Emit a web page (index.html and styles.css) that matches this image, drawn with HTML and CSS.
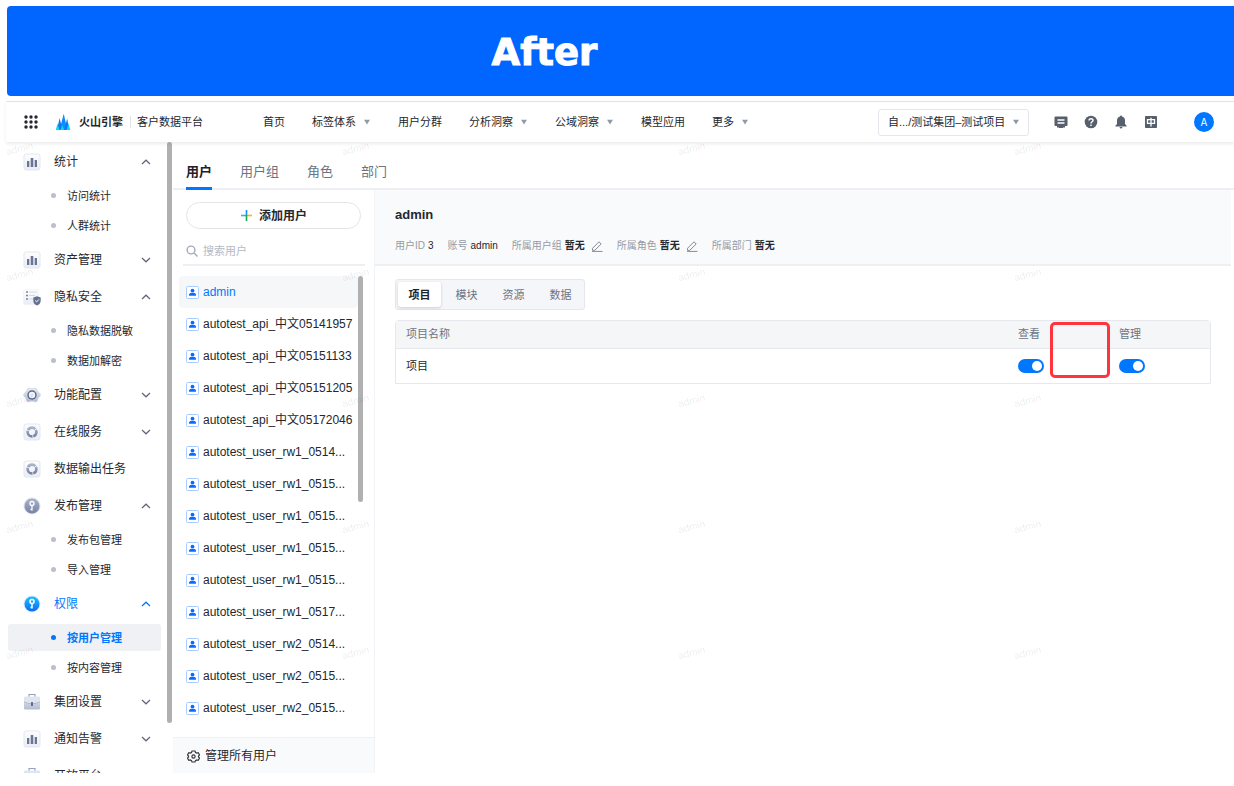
FILE: index.html
```html
<!DOCTYPE html>
<html lang="zh-CN">
<head>
<meta charset="utf-8">
<meta name="viewport" content="width=device-width, initial-scale=1">
<title>客户数据平台</title>
<link rel="stylesheet" href="styles.css">
</head>
<body>
<svg class="defs" aria-hidden="true">
  <defs>
    <linearGradient id="tile" x1="0" y1="0" x2="0" y2="1"><stop offset="0" stop-color="#fdfdfe"/><stop offset="1" stop-color="#e9edf5"/></linearGradient>
    <linearGradient id="slate" x1="0" y1="0" x2="0" y2="1"><stop offset="0" stop-color="#a9b3ca"/><stop offset="1" stop-color="#7783a5"/></linearGradient>
    <linearGradient id="pale" x1="0" y1="0" x2="0" y2="1"><stop offset="0" stop-color="#e6eaf2"/><stop offset="1" stop-color="#b3bdd2"/></linearGradient>
    <linearGradient id="sky" x1="0" y1="0" x2="0" y2="1"><stop offset="0" stop-color="#1cc0ff"/><stop offset="1" stop-color="#0a6cf0"/></linearGradient>
  </defs>
  <symbol id="i-chart" viewBox="0 0 18 18"><rect x="1" y="1" width="16" height="16" rx="2" fill="url(#tile)" stroke="#e3e7f0"/><path d="M4 8h2.300v6H4zM7.700 5h2.600v9H7.700zM11.700 7H14v7h-2.300z" fill="#6b7593"/></symbol>
  <symbol id="i-shield" viewBox="0 0 18 18"><rect x=".5" y="1.500" width="15" height="15" rx="1" fill="url(#tile)" stroke="#edf0f6" stroke-width=".6"/><path d="M3 4h2M3 7.500h2M3 11h2" stroke="#7a85a3" stroke-width="1.500"/><path d="M6 4h8M6 7.500h6M6 11h4" stroke="#d3d8e4"/><path d="M14 8.200l3.700 1.300v3.200c0 2.300-1.500 3.800-3.700 4.800-2.200-1-3.700-2.500-3.700-4.800V9.500z" fill="#66718f"/><path d="M12.200 12.500l1.400 1.400 2.400-2.500" fill="none" stroke="#fff"/></symbol>
  <symbol id="i-config" viewBox="0 0 18 18"><path d="M5 2.200c1-.6 2.200.4 4 .4s3-1 4-.4l1.500 2.500c.2 1 1.800 1.800 3 4-.2 2-2 2.800-2.500 3.800s0 2.200-1.500 3.200c-1.500.6-2.500-.5-4.500-.5s-3 1.100-4.500.5c-1.500-1-1-2.200-1.500-3.200S.700 10.700.5 8.700c1.200-2.200 2.800-3 3-4z" fill="url(#pale)" stroke="#c9d0df" stroke-width=".6"/><circle cx="9" cy="9" r="4.700" fill="#5f6d92"/><circle cx="9" cy="9" r="3.200" fill="#f4f6fa"/><circle cx="9" cy="9" r="1.600" fill="#dde2ed"/></symbol>
  <symbol id="i-ring" viewBox="0 0 18 18"><rect x="1" y="1" width="16" height="16" rx="2" fill="url(#tile)" stroke="#e3e7f0"/><circle cx="9" cy="9" r="4.400" fill="none" stroke="url(#slate)" stroke-width="2.600" stroke-dasharray="8.400 .815" stroke-dashoffset="3"/></symbol>
  <symbol id="i-key" viewBox="0 0 18 18"><circle cx="9" cy="9" r="8.500" fill="#e1e5ee"/><circle cx="9" cy="9" r="7.500" fill="url(#slate)"/><circle cx="9" cy="6.500" r="2" fill="none" stroke="#fff" stroke-width="1.300"/><path d="M9 8.500v5M9 12.500H7.500" fill="none" stroke="#fff" stroke-width="1.300"/></symbol>
  <symbol id="i-key-on" viewBox="0 0 18 18"><circle cx="9" cy="9" r="8.500" fill="#dce9f8"/><circle cx="9" cy="9" r="7.500" fill="url(#sky)"/><circle cx="9" cy="6.500" r="2" fill="none" stroke="#fff" stroke-width="1.500"/><path d="M9 8.500v5M9 12.500H7.500" fill="none" stroke="#fff" stroke-width="1.500"/></symbol>
  <symbol id="i-case" viewBox="0 0 18 18"><path d="M6 4V1.500h6V4" fill="none" stroke="#97a3bd" stroke-width="1.200"/><rect x="1" y="3.500" width="16" height="13" rx="1.200" fill="url(#pale)"/><path d="M1 4.500h16v4.200c-4 2.600-12 2.600-16 0z" fill="#dfe4ee"/><path d="M1 8.700c4 2.600 12 2.600 16 0" fill="none" stroke="#a4aec6" stroke-width=".8"/><rect x="8" y="9" width="2" height="4" rx=".6" fill="#5f6c90"/></symbol>
  <symbol id="i-up" viewBox="0 0 10 6"><path d="M1 5l4-3.800L9 5" fill="none" stroke="currentColor" stroke-width="1.200"/></symbol>
  <symbol id="i-down" viewBox="0 0 10 6"><path d="M1 1l4 3.800L9 1" fill="none" stroke="currentColor" stroke-width="1.200"/></symbol>
  <symbol id="i-caret" viewBox="0 0 8 6"><path d="M1 .8h6L4 5.400z" fill="#8f9baa"/></symbol>
  <symbol id="i-user" viewBox="0 0 13 13"><rect x=".5" y=".5" width="12" height="12" rx="1" fill="#fff" stroke="#a9cdff"/><circle cx="6.500" cy="4.700" r="1.900" fill="#0a6cff"/><path d="M3 9.800V8.600c0-1 1-1.600 2.200-1.600h2.600c1.200 0 2.200.6 2.200 1.600v1.200z" fill="#0a6cff"/></symbol>
  <symbol id="i-edit" viewBox="0 0 12 12"><path d="M1.500 8.300L8 1.800l2.200 2.200-6.500 6.300H1.500zM1 11.400h10.500" fill="none" stroke="#858b94"/></symbol>
</svg>

<div class="banner"><h1>After</h1></div>

<div class="app">
  <header class="topbar">
    <button class="plain apps" aria-label="应用">
      <svg width="14" height="14" viewBox="0 0 14 14" fill="#24272c"><circle cx="2" cy="2" r="1.700"/><circle cx="7" cy="2" r="1.700"/><circle cx="12" cy="2" r="1.700"/><circle cx="2" cy="7" r="1.700"/><circle cx="7" cy="7" r="1.700"/><circle cx="12" cy="7" r="1.700"/><circle cx="2" cy="12" r="1.700"/><circle cx="7" cy="12" r="1.700"/><circle cx="12" cy="12" r="1.700"/></svg>
    </button>
    <a class="brand" href="#">
      <svg width="16" height="18" viewBox="0 0 16 18"><path d="M4.500 17L8.700 .8 12.500 17z" fill="#0b8cff"/><path d="M2 17L4.600 5 7.500 17z" fill="#1474f5"/><path d="M9.500 17l2.600-11.500L14.500 17z" fill="#1474f5"/><path d="M.8 17l1.700-6.500L4.500 17zM11.500 17l2-6.500 1.900 6.500zM5.500 17l1.800-5 1.900 5z" fill="#00dcf0"/></svg>
      <strong>火山引擎</strong>
      <span>客户数据平台</span>
    </a>
    <nav class="menu" aria-label="主导航">
      <a href="#">首页</a>
      <a href="#">标签体系<svg><use href="#i-caret"/></svg></a>
      <a href="#">用户分群</a>
      <a href="#">分析洞察<svg><use href="#i-caret"/></svg></a>
      <a href="#">公域洞察<svg><use href="#i-caret"/></svg></a>
      <a href="#">模型应用</a>
      <a href="#">更多<svg><use href="#i-caret"/></svg></a>
    </nav>
    <div class="project">
      <select aria-label="项目"><option>自.../测试集团–测试项目</option></select>
      <svg><use href="#i-caret"/></svg>
    </div>
    <div class="tools">
      <button class="plain" aria-label="工单"><svg width="14" height="14" viewBox="0 0 14 14"><path d="M1.500 1.500h11q1 0 1 1V10q0 1-1 1H11v1.500H9V13H5v-.5H3V11H1.500q-1 0-1-1V2.500q0-1 1-1z" fill="#565f6b"/><path d="M3.500 5h7M3.500 8h7" stroke="#fff" stroke-width="1.300"/></svg></button>
      <button class="plain" aria-label="帮助"><svg width="14" height="14" viewBox="0 0 14 14"><circle cx="7" cy="7" r="6.300" fill="#565f6b"/><path d="M5 5.600C5 3 9.200 3.100 9 5.500 8.900 6.800 7 6.800 7 8.400M7 9.500V11" fill="none" stroke="#fff" stroke-width="1.400"/></svg></button>
      <button class="plain" aria-label="通知"><svg width="14" height="14" viewBox="0 0 14 14"><path d="M7 .6q1 0 1 1c2 .5 3 2 3 4V9l1.600 1.700v.7H1.400v-.7L3 9V5.600c0-2 1-3.500 3-4q0-1 1-1zM5.500 12h3q-.4 1.500-1.500 1.500T5.500 12z" fill="#565f6b"/></svg></button>
      <button class="plain" aria-label="语言"><svg width="14" height="14" viewBox="0 0 14 14"><rect x="1" y="1" width="12" height="12" rx=".8" fill="#565f6b"/><path d="M3.500 4.700h7v3.600h-7zM7 2.800v8.700" fill="none" stroke="#fff" stroke-width="1.300"/></svg></button>
    </div>
    <button class="plain avatar">A</button>
  </header>

  <div class="body">
    <nav class="side" aria-label="功能导航">
      <div class="side-list">
        <button class="group"><svg><use href="#i-chart"/></svg><span>统计</span><svg class="chev"><use href="#i-up"/></svg></button>
        <div class="subs"><a href="#">访问统计</a><a href="#">人群统计</a></div>
        <button class="group"><svg><use href="#i-chart"/></svg><span>资产管理</span><svg class="chev"><use href="#i-down"/></svg></button>
        <button class="group"><svg><use href="#i-shield"/></svg><span>隐私安全</span><svg class="chev"><use href="#i-up"/></svg></button>
        <div class="subs"><a href="#">隐私数据脱敏</a><a href="#">数据加解密</a></div>
        <button class="group"><svg><use href="#i-config"/></svg><span>功能配置</span><svg class="chev"><use href="#i-down"/></svg></button>
        <button class="group"><svg><use href="#i-ring"/></svg><span>在线服务</span><svg class="chev"><use href="#i-down"/></svg></button>
        <button class="group"><svg><use href="#i-ring"/></svg><span>数据输出任务</span></button>
        <button class="group"><svg><use href="#i-key"/></svg><span>发布管理</span><svg class="chev"><use href="#i-up"/></svg></button>
        <div class="subs"><a href="#">发布包管理</a><a href="#">导入管理</a></div>
        <button class="group open"><svg><use href="#i-key-on"/></svg><span>权限</span><svg class="chev"><use href="#i-up"/></svg></button>
        <div class="subs"><a class="current" href="#">按用户管理</a><a href="#">按内容管理</a></div>
        <button class="group"><svg><use href="#i-case"/></svg><span>集团设置</span><svg class="chev"><use href="#i-down"/></svg></button>
        <button class="group"><svg><use href="#i-chart"/></svg><span>通知告警</span><svg class="chev"><use href="#i-down"/></svg></button>
        <button class="group"><svg><use href="#i-case"/></svg><span>开放平台</span></button>
      </div>
      <div class="thumb side-thumb"></div>
    </nav>

    <main class="main">
      <nav class="tabs" aria-label="权限对象">
        <a class="current" href="#">用户</a><a href="#">用户组</a><a href="#">角色</a><a href="#">部门</a>
      </nav>
      <div class="columns">
        <section class="users">
          <button class="add">
            <svg width="13" height="13" viewBox="0 0 13 13" stroke-width="1.600"><path d="M6.500 1v5.500" stroke="#168cff"/><path d="M1 6.500h5.500" stroke="#20b8f5"/><path d="M6.500 6.500h5.500" stroke="#ffb400"/><path d="M6.500 6v6" stroke="#18a84a"/></svg>
            添加用户
          </button>
          <label class="search">
            <svg width="12" height="12" viewBox="0 0 12 12" fill="none" stroke="#a3abba" stroke-width="1.400"><circle cx="5" cy="5" r="3.900"/><path d="M8 8l3.500 3.500"/></svg>
            <input type="text" placeholder="搜索用户" aria-label="搜索用户">
          </label>
          <div class="list-wrap">
            <ul class="list">
              <li class="current"><svg><use href="#i-user"/></svg><a href="#">admin</a></li>
              <li><svg><use href="#i-user"/></svg><a href="#">autotest_api_中文05141957</a></li>
              <li><svg><use href="#i-user"/></svg><a href="#">autotest_api_中文05151133</a></li>
              <li><svg><use href="#i-user"/></svg><a href="#">autotest_api_中文05151205</a></li>
              <li><svg><use href="#i-user"/></svg><a href="#">autotest_api_中文05172046</a></li>
              <li><svg><use href="#i-user"/></svg><a href="#">autotest_user_rw1_0514...</a></li>
              <li><svg><use href="#i-user"/></svg><a href="#">autotest_user_rw1_0515...</a></li>
              <li><svg><use href="#i-user"/></svg><a href="#">autotest_user_rw1_0515...</a></li>
              <li><svg><use href="#i-user"/></svg><a href="#">autotest_user_rw1_0515...</a></li>
              <li><svg><use href="#i-user"/></svg><a href="#">autotest_user_rw1_0515...</a></li>
              <li><svg><use href="#i-user"/></svg><a href="#">autotest_user_rw1_0517...</a></li>
              <li><svg><use href="#i-user"/></svg><a href="#">autotest_user_rw2_0514...</a></li>
              <li><svg><use href="#i-user"/></svg><a href="#">autotest_user_rw2_0515...</a></li>
              <li><svg><use href="#i-user"/></svg><a href="#">autotest_user_rw2_0515...</a></li>
            </ul>
            <div class="thumb list-thumb"></div>
          </div>
          <button class="manage">
            <svg width="13" height="13" viewBox="0 0 13 13" fill="none" stroke="#33373e" stroke-width="1.200"><path d="M5 1h3l.5 1.500 1.200.6 1.500-.5 1.300 2.200-1 1.200v1l1 1.200-1.300 2.200-1.500-.4-1.200.6L8 12H5l-.5-1.400-1.200-.6-1.500.4L.5 8.200l1-1.200V6l-1-1.200 1.300-2.200 1.500.5 1.200-.6z"/><circle cx="6.500" cy="6.500" r="1.600"/></svg>
            管理所有用户
          </button>
        </section>

        <section class="detail">
          <div class="summary">
            <h2>admin</h2>
            <dl>
              <div><dt>用户ID</dt><dd>3</dd></div>
              <div><dt>账号</dt><dd>admin</dd></div>
              <div><dt>所属用户组</dt><dd class="strong">暂无</dd><button class="plain edit" aria-label="编辑用户组"><svg><use href="#i-edit"/></svg></button></div>
              <div><dt>所属角色</dt><dd class="strong">暂无</dd><button class="plain edit" aria-label="编辑角色"><svg><use href="#i-edit"/></svg></button></div>
              <div><dt>所属部门</dt><dd class="strong">暂无</dd></div>
            </dl>
          </div>
          <div class="content">
            <div class="segments">
              <button class="current">项目</button><button>模块</button><button>资源</button><button>数据</button>
            </div>
            <div class="table-wrap">
              <table>
                <thead><tr><th>项目名称</th><th class="perm">查看</th><th class="perm">管理</th></tr></thead>
                <tbody><tr><td>项目</td><td><input type="checkbox" role="switch" checked aria-label="查看"></td><td><input type="checkbox" role="switch" checked aria-label="管理"></td></tr></tbody>
              </table>
              <div class="callout"></div>
            </div>
          </div>
        </section>
      </div>
    </main>

    <div class="watermark" aria-hidden="true">
      <span>admin</span><span>admin</span><span>admin</span><span>admin</span>
      <span>admin</span><span>admin</span><span>admin</span><span>admin</span>
      <span>admin</span><span>admin</span><span>admin</span><span>admin</span>
      <span>admin</span><span>admin</span><span>admin</span><span>admin</span>
      <span>admin</span><span>admin</span><span>admin</span><span>admin</span>
    </div>
  </div>
</div>
</body>
</html>
```
FILE: styles.css
```css
* {
  box-sizing: border-box;
}

body {
  display: flex;
  flex-direction: column;
  gap: 5px;
  height: 100vh;
  margin: 0;
  padding: 6px 0 13px 6px;
  overflow: hidden;
  background: #fff;
  color: #24272e;
  font-family: "Liberation Sans", "Noto Sans CJK SC", sans-serif;
  font-size: 11px;
  line-height: 16px;
}

a {
  color: inherit;
  text-decoration: none;
}

button,
input,
select {
  font: inherit;
  color: inherit;
}

svg {
  flex: none;
}

.defs {
  position: absolute;
  width: 0;
  height: 0;
}

.plain {
  display: flex;
  padding: 0;
  border: 0;
  background: none;
}

.banner {
  display: flex;
  flex: none;
  align-items: center;
  justify-content: center;
  margin-left: 1px;
  padding: 23px 152px 19px 0;
  border-radius: 4px 0 0 4px;
  background: #06f;
  color: #fff;
}

.banner h1 {
  margin: 0;
  font-family: "Arial Black", "DejaVu Sans", sans-serif;
  font-size: 37px;
  font-weight: 900;
  line-height: 48px;
  -webkit-text-stroke: 1px #fff;
}

.app {
  display: flex;
  flex: 1;
  flex-direction: column;
  min-height: 0;
}

/* Top bar */
.topbar {
  position: relative;
  z-index: 2;
  display: flex;
  flex: none;
  align-items: center;
  height: 41px;
  padding: 0 20px 0 18px;
  border-top: 1px solid #e2e3e5;
  background: #fff;
  box-shadow: 0 2px 3px rgba(0, 0, 0, 0.08);
}

.brand {
  display: flex;
  align-items: center;
  margin-left: 17px;
}

.brand strong {
  margin-left: 8px;
  padding-right: 7px;
  border-right: 1px solid #e2e4e8;
  line-height: 12px;
}

.brand span {
  margin-left: 6px;
}

.menu {
  display: flex;
  gap: 27px;
  margin-left: 60px;
}

.menu a {
  display: flex;
  align-items: center;
  gap: 7px;
}

.menu svg,
.project svg {
  width: 8px;
  height: 6px;
}

.project {
  position: relative;
  width: 151px;
  margin-left: auto;
}

.project select {
  display: block;
  width: 100%;
  height: 27px;
  padding: 0 21px 0 9px;
  border: 1px solid #e3e6ee;
  border-radius: 3px;
  background: #fff;
  appearance: none;
}

.project svg {
  position: absolute;
  top: 10px;
  right: 9px;
}

.tools {
  display: flex;
  gap: 16px;
  margin-left: 25px;
}

.avatar {
  align-items: center;
  justify-content: center;
  width: 20px;
  height: 20px;
  margin-left: 36px;
  border-radius: 50%;
  background: #0077ff;
  color: #fff;
  font-family: Inter, sans-serif;
  font-size: 10px;
}

/* Side navigation */
.body {
  position: relative;
  display: flex;
  flex: 1;
  min-height: 0;
  overflow: hidden;
}

.side {
  display: flex;
  flex: none;
  width: 167px;
  padding-right: 1px;
  overflow: hidden;
}

.side-list {
  flex: 1;
  padding: 1px 6px 0 2px;
}

.thumb {
  flex: none;
  width: 5px;
  border-radius: 3px;
  background: #b0b0b0;
}

.side-thumb {
  height: 92%;
}

.group {
  display: flex;
  align-items: center;
  width: 100%;
  height: 37px;
  padding: 0 10px 0 15px;
  border: 0;
  background: none;
  font-size: 12px;
}

.group svg {
  width: 18px;
  height: 18px;
}

.group span {
  margin-left: 13px;
}

.group .chev {
  width: 10px;
  height: 6px;
  margin-left: auto;
  color: #5e6677;
}

.group.open,
.group.open .chev {
  color: #0077ff;
}

.subs {
  display: grid;
  gap: 3px;
  padding: 2px 0;
}

.subs a {
  display: flex;
  align-items: center;
  gap: 11px;
  height: 27px;
  padding-left: 43px;
  border-radius: 3px;
}

.subs a::before {
  width: 5px;
  height: 5px;
  border-radius: 50%;
  background: #b9bfce;
  content: "";
}

.subs .current {
  background: #f0f1f5;
  color: #0077ff;
  font-weight: bold;
}

.subs .current::before {
  background: #0077ff;
}

/* Main area */
.main {
  display: flex;
  flex: 1;
  flex-direction: column;
  min-width: 0;
}

.tabs {
  display: flex;
  flex: none;
  gap: 28px;
  height: 48px;
  padding: 0 13px;
  border-bottom: 2px solid #eeeff4;
  color: #6b7482;
  font-size: 13px;
}

.tabs a {
  height: 48px;
  padding-top: 20px;
  line-height: 20px;
}

.tabs .current {
  border-bottom: 3px solid #0077ff;
  border-radius: 2px 2px 0 0;
  color: #1d2129;
  font-weight: bold;
}

.columns {
  display: flex;
  flex: 1;
  min-height: 0;
}

/* User list */
.users {
  display: flex;
  flex: none;
  flex-direction: column;
  width: 202px;
  border-right: 1px solid #f2f3f6;
}

.add {
  display: flex;
  flex: none;
  align-items: center;
  justify-content: center;
  gap: 6px;
  height: 27px;
  margin: 12px 13px 0;
  border: 1px solid #e3e4e8;
  border-radius: 14px;
  background: #fff;
  font-size: 12px;
  font-weight: bold;
}

.search {
  display: flex;
  flex: none;
  align-items: center;
  gap: 5px;
  height: 37px;
  margin: 0 9px 0 10px;
  padding: 8px 0 0 3px;
  border-bottom: 2px solid #eeeff2;
}

.search input {
  flex: 1;
  min-width: 0;
  padding: 0;
  border: 0;
  outline: 0;
}

.search input::placeholder {
  color: #b5bac4;
}

.list-wrap {
  display: flex;
  flex: 1;
  min-height: 0;
  padding: 10px 11px 0 6px;
}

.list {
  flex: 1;
  min-width: 0;
  margin: 0;
  padding: 0;
  overflow: hidden;
  font-size: 12px;
  list-style: none;
}

.list li {
  display: flex;
  align-items: center;
  gap: 4px;
  height: 32px;
  padding-left: 7px;
  border-radius: 4px;
  white-space: nowrap;
}

.list .current {
  background: #f6f7f9;
  color: #0077ff;
}

.list svg {
  width: 13px;
  height: 13px;
}

.list-thumb {
  height: 49%;
}

.manage {
  display: flex;
  flex: none;
  align-items: center;
  gap: 5px;
  height: 36px;
  padding: 1px 14px 0;
  border: 0;
  border-top: 1px solid #f0f1f4;
  background: #f9fafc;
  font-size: 12px;
}

/* Selected user */
.detail {
  flex: 1;
  min-width: 0;
  padding-right: 3px;
}

.summary {
  padding: 15px 20px 10px;
  border-bottom: 2px solid #eeeff2;
  background: #f9fafc;
}

.summary h2 {
  margin: 0;
  font-size: 13px;
  line-height: 20px;
}

.summary dl {
  display: flex;
  gap: 14px;
  margin: 13px 0 0;
  font-size: 10px;
}

.summary dl div {
  display: flex;
  align-items: center;
  gap: 3px;
}

.summary dt {
  color: #969ba5;
}

.summary dd {
  margin: 0;
}

.strong {
  font-weight: bold;
}

.edit {
  margin-left: 3px;
}

.edit svg {
  width: 12px;
  height: 12px;
}

.content {
  padding: 13px 20px;
}

.segments {
  display: inline-flex;
  gap: 4px;
  padding: 2px;
  border: 1px solid #e4e7ee;
  border-radius: 3px;
  background: #f5f6f9;
  vertical-align: top;
}

.segments button {
  width: 43px;
  height: 25px;
  padding: 0;
  border: 0;
  border-radius: 3px;
  background: none;
  color: #6b7482;
}

.segments .current {
  background: #fff;
  box-shadow: 0 1px 3px rgba(30, 40, 60, 0.2);
  color: #1d2129;
  font-weight: bold;
}

.table-wrap {
  position: relative;
  margin-top: 10px;
  border: 1px solid #e6e8ee;
  border-radius: 4px 4px 0 0;
}

table {
  width: 100%;
  border-collapse: collapse;
}

th,
td {
  padding: 0 10px;
  text-align: left;
}

th {
  height: 27px;
  border-bottom: 1px solid #e6e8ee;
  background: #f5f6f8;
  color: #6b7482;
  font-weight: normal;
}

td {
  height: 35px;
}

.perm {
  width: 101px;
}

input[type="checkbox"] {
  display: flex;
  align-items: center;
  justify-content: flex-end;
  width: 26px;
  height: 14px;
  margin: 0;
  padding: 0 2px;
  border-radius: 7px;
  background: #0077ff;
  appearance: none;
}

input[type="checkbox"]::before {
  width: 10px;
  height: 10px;
  border-radius: 50%;
  background: #fff;
  content: "";
}

/* Highlight drawn over the gap between the two permission columns */
.callout {
  position: absolute;
  top: 1px;
  right: 100px;
  width: 60px;
  height: 56px;
  border: 3px solid #ff343d;
  border-radius: 5px;
}

.watermark {
  position: absolute;
  inset: 0;
  display: grid;
  grid-template-columns: repeat(4, 336px);
  grid-auto-rows: 126px;
  overflow: hidden;
  color: rgba(0, 0, 0, 0.09);
  font-family: "Liberation Sans", sans-serif;
  font-size: 10px;
  line-height: 14px;
  pointer-events: none;
}

.watermark span {
  justify-self: start;
  align-self: start;
  transform: rotate(-15deg);
}
```
